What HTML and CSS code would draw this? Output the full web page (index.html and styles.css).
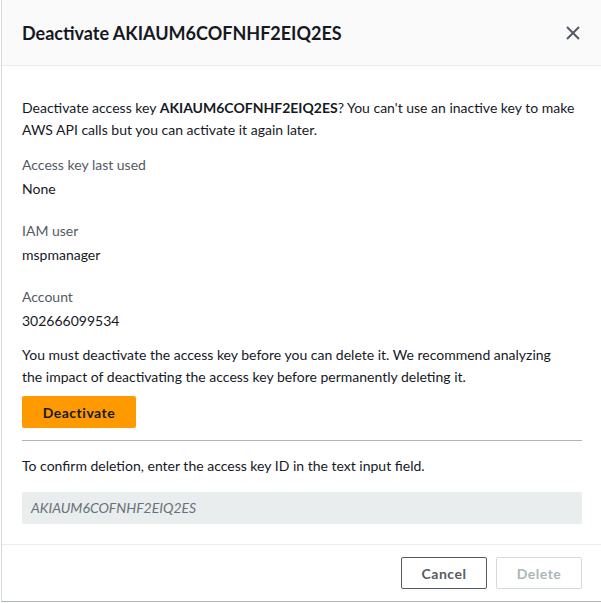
FILE: index.html
```html
<!DOCTYPE html>
<html>
<head>
<meta charset="utf-8">
<link rel="stylesheet" href="styles.css">
</head>
<body>
<div class="modal">
  <header class="modal-header">
    <h2 class="title">Deactivate AKIAUM6COFNHF2EIQ2ES</h2>
    <button class="close" aria-label="Close">
      <svg width="16" height="16" viewBox="0 0 16 16"><path d="M2 2l12 12M14 2L2 14" stroke="#545b64" stroke-width="2" fill="none"/></svg>
    </button>
  </header>
  <div class="modal-body">
    <p class="intro">Deactivate access key <b>AKIAUM6COFNHF2EIQ2ES</b>? You can't use an inactive key to make AWS API calls but you can activate it again later.</p>
    <div class="field">
      <div class="label">Access key last used</div>
      <div class="value">None</div>
    </div>
    <div class="field">
      <div class="label">IAM user</div>
      <div class="value">mspmanager</div>
    </div>
    <div class="field field-last">
      <div class="label">Account</div>
      <div class="value">302666099534</div>
    </div>
    <p class="note">You must deactivate the access key before you can delete it. We recommend analyzing the impact of deactivating the access key before permanently deleting it.</p>
    <button class="btn-primary">Deactivate</button>
    <hr class="divider">
    <p class="confirm">To confirm deletion, enter the access key ID in the text input field.</p>
    <div class="input">AKIAUM6COFNHF2EIQ2ES</div>
  </div>
  <footer class="modal-footer">
    <button class="btn btn-normal">Cancel</button>
    <button class="btn btn-disabled">Delete</button>
  </footer>
</div>
</body>
</html>
```
FILE: styles.css
```css
html, body { margin: 0; padding: 0; background: #fff; }
body {
  font-family: Lato, "Open Sans", sans-serif;
  font-size: 14px;
  line-height: 22px;
  color: #16191f;
}
.modal {
  width: 600px;
  margin-left: 1px;
  box-sizing: border-box;
  border-left: 1px solid #d5dbdb;
  border-bottom: 1px solid #aab7b8;
}
.modal-header {
  height: 65px;
  background: #fafafa;
  border-bottom: 1px solid #eaeded;
  display: flex;
  align-items: center;
  justify-content: space-between;
  padding: 0 20px 0 20px;
}
.title {
  margin: 0;
  font-size: 18px;
  font-weight: 700;
  line-height: 22px;
  color: #16191f;
}
.close {
  border: 0;
  background: none;
  padding: 0;
  width: 16px;
  height: 16px;
  display: flex;
}
.modal-body {
  padding: 31px 19px 20px 20px;
}
p { margin: 0; }
.intro { margin-bottom: 13px; }
.field { margin-bottom: 20px; }
.field-last { margin-bottom: 12px; }
.label { color: #545b64; }
.value { margin-top: 2px; color: #16191f; }
.note { margin-bottom: 8px; max-width: 545px; }
.btn-primary {
  display: block;
  font-family: inherit;
  font-size: 14px;
  font-weight: 700;
  letter-spacing: 0.5px;
  background: #ff9900;
  color: #16191f;
  border: 0;
  border-radius: 2px;
  width: 114px;
  height: 32px;
  padding: 0;
}
.divider {
  border: 0;
  border-top: 1px solid #aab7b8;
  margin: 12px 0 14px;
  height: 0;
}
.confirm { margin-bottom: 15px; }
.input {
  height: 32px;
  background: #eaeded;
  border-radius: 2px;
  color: #687078;
  font-style: italic;
  line-height: 32px;
  padding: 0 9px;
}
.modal-footer {
  border-top: 1px solid #eaeded;
  display: flex;
  justify-content: flex-end;
  gap: 9px;
  padding: 12px 19px 12px 0;
}
.btn {
  font-family: inherit;
  font-size: 14px;
  font-weight: 700;
  letter-spacing: 0.5px;
  height: 32px;
  width: 86px;
  border-radius: 2px;
  background: #fff;
  padding: 0;
  box-sizing: border-box;
}
.btn-normal { border: 1px solid #545b64; color: #545b64; }
.btn-disabled { border: 1px solid #d5dbdb; color: #aab7b8; }
```
